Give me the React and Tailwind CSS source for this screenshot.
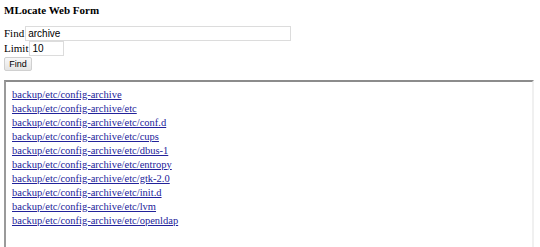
import React from 'react';

const results = [
  'backup/etc/config-archive',
  'backup/etc/config-archive/etc',
  'backup/etc/config-archive/etc/conf.d',
  'backup/etc/config-archive/etc/cups',
  'backup/etc/config-archive/etc/dbus-1',
  'backup/etc/config-archive/etc/entropy',
  'backup/etc/config-archive/etc/gtk-2.0',
  'backup/etc/config-archive/etc/init.d',
  'backup/etc/config-archive/etc/lvm',
  'backup/etc/config-archive/etc/openldap',
];

const App = () => {
  return (
    <div className="w-[540px] h-[247px] overflow-hidden bg-white px-[4px] font-['Liberation_Serif',serif] text-[11px] text-black">
      <h1 className="pt-[4px] text-[11px] font-bold leading-[13px]">MLocate Web Form</h1>
      <form className="mt-[9px]">
        <div className="flex items-center h-[14px]">
          <span>Find</span>
          <input
            defaultValue="archive"
            className="ml-[1px] w-[266px] h-[15px] border border-[#dcdcdc] px-[2px] font-['Liberation_Sans',sans-serif] text-[10px] outline-none"
          />
        </div>
        <div className="flex items-center h-[14px] mt-[1px]">
          <span>Limit</span>
          <input
            defaultValue="10"
            className="ml-[1px] w-[35px] h-[15px] border border-[#dcdcdc] px-[2px] font-['Liberation_Sans',sans-serif] text-[10px] outline-none"
          />
        </div>
        <button
          type="button"
          className="mt-[1px] h-[14px] w-[28px] border border-[#d0d0d0] rounded-[2px] bg-gradient-to-b from-[#f8f8f8] to-[#e4e4e4] font-['Liberation_Sans',sans-serif] text-[9px] leading-[12px]"
        >
          Find
        </button>
      </form>
      <div className="mt-[8px] w-[530px] h-[200px] border-2 border-t-[#8c8c8c] border-l-[#9a9a9a] border-r-[#f0f0f0] border-b-[#f0f0f0]">
        <div className="pt-[6px] pl-[6px] text-[10.5px] leading-[14px]">
          {results.map((r, i) => (
            <div key={i}>
              <a href="#" className="text-[#22229a] underline">{r}</a>
            </div>
          ))}
        </div>
      </div>
    </div>
  );
};

export default App;
